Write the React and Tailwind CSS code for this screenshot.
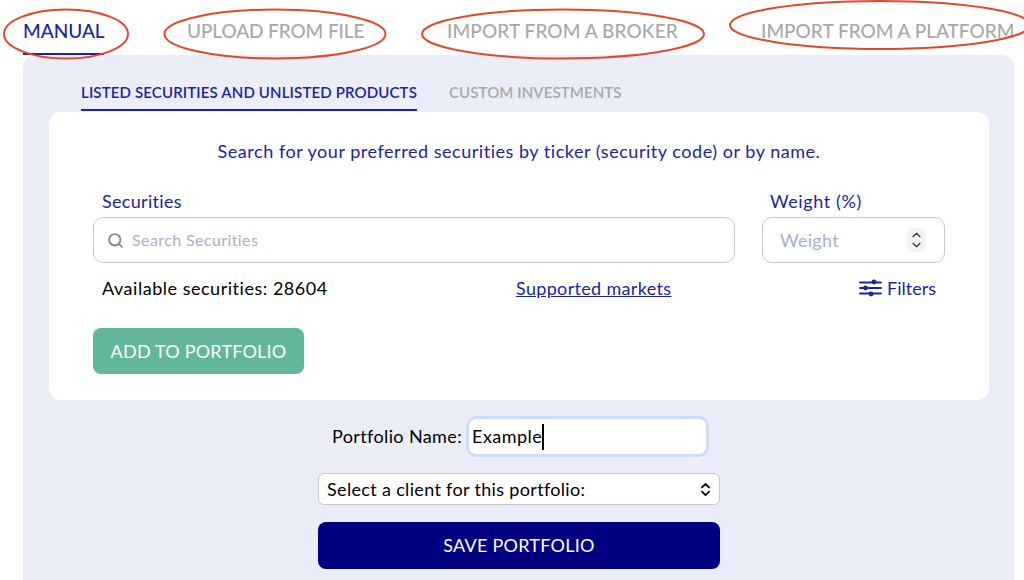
import React from "react";
import { Search, ChevronUp, ChevronDown, ChevronsUpDown } from "lucide-react";

const tabs = [
  { t: "UPLOAD FROM FILE", w: "w-[178px] ml-[83px] tracking-[-0.1px]" },
  { t: "IMPORT FROM A BROKER", w: "w-[231px] ml-[82px] tracking-[0.1px]" },
  { t: "IMPORT FROM A PLATFORM", w: "w-[253px] ml-[83px] tracking-[0px]" },
];

export default function App() {
  return (
    <div className="relative w-[1024px] h-[580px] overflow-hidden bg-white font-['Lato',sans-serif] text-[18px]">
      <div className="flex h-[55px] pl-[23px]">
        <div className="w-[81px] h-[55px] border-b-2 border-[#1a24a5] pt-[17px] text-[19px] leading-[28px] font-medium text-[#1a24a5] whitespace-nowrap">MANUAL</div>
        {tabs.map((x) => (
          <div key={x.t} className={`${x.w} pt-[17px] text-[19px] leading-[28px] text-[#a8a8a8] whitespace-nowrap font-medium`}>{x.t}</div>
        ))}
      </div>

      <div className="ml-[23px] w-[991px] h-[525px] rounded-t-[12px] bg-[#ebedf8] pl-[26px] pr-[25px]">
        <div className="flex h-[57px] pl-[32px]">
          <div className="w-[336px] h-[56px] border-b-2 border-[#1a24a5] pt-[26px] text-[15px] leading-[22px] font-semibold text-[#1a24a5] whitespace-nowrap tracking-[0.14px]">LISTED SECURITIES AND UNLISTED PRODUCTS</div>
          <div className="ml-[32px] pt-[26px] text-[15px] leading-[22px] font-semibold text-[#a8a8a8] whitespace-nowrap tracking-[0.1px]">CUSTOM INVESTMENTS</div>
        </div>

        <div className="w-[940px] h-[288px] rounded-[12px] bg-white px-[44px] pt-[26px]">
          <p className="text-center text-[18px] leading-[26px] text-[#1a24a5] tracking-[0.53px]">Search for your preferred securities by ticker (security code) or by name.</p>

          <div className="mt-[24px] flex gap-[27px]">
            <div className="w-[642px]">
              <div className="pl-[9px] text-[18px] leading-[26px] text-[#1a24a5] tracking-[0.3px]">Securities</div>
              <div className="mt-[3px] flex h-[46px] items-center rounded-[10px] border border-[#c8c8c8] pl-[13px]">
                <Search size={17} strokeWidth={2.8} className="text-[#8a8a8a]" />
                <span className="ml-[8px] text-[16px] text-[#a7b1c4] tracking-[0.4px]">Search Securities</span>
              </div>
            </div>
            <div className="w-[183px]">
              <div className="pl-[8px] text-[18px] leading-[26px] text-[#1a24a5] tracking-[0.6px]">Weight (%)</div>
              <div className="mt-[3px] flex h-[46px] items-center justify-between rounded-[10px] border border-[#c8c8c8] pl-[17px] pr-[18px]">
                <span className="text-[18px] text-[#a7b1c4] tracking-[0.3px]">Weight</span>
                <span className="flex h-[24px] w-[19px] flex-col items-center justify-center rounded-[6px] bg-[#f2f2f2] text-[#333]">
                  <ChevronUp size={15} strokeWidth={2} className="-mb-[2px]" />
                  <ChevronDown size={15} strokeWidth={2} className="-mt-[2px]" />
                </span>
              </div>
            </div>
          </div>

          <div className="mt-[12px] flex h-[26px] items-center justify-between pl-[9px] pr-[9px] leading-[26px]">
            <span className="w-[300px] text-black tracking-[0.52px]">Available securities: 28604</span>
            <a className="ml-[114px] text-[#1a24a5] underline tracking-[0.33px]">Supported markets</a>
            <span className="ml-auto flex items-center gap-[5px] text-[#1a24a5]">
              <svg width="23" height="20" viewBox="0 0 23 20" fill="none" stroke="currentColor" strokeWidth="1.8" strokeLinecap="round">
                <path d="M1 4.5h12M17 4.5h5M1 10h3M9 10h13M1 15.5h9M14 15.5h8" />
                <circle cx="15" cy="4" r="2.4" fill="currentColor" stroke="none" />
                <circle cx="6.5" cy="10" r="2.4" fill="currentColor" stroke="none" />
                <circle cx="12" cy="16" r="2.4" fill="currentColor" stroke="none" />
              </svg>
              Filters
            </span>
          </div>

          <button className="mt-[27px] block h-[46px] w-[211px] rounded-[8px] bg-[#63b79a] text-center text-[18px] text-white tracking-[0.2px]">ADD TO PORTFOLIO</button>
        </div>

        <div className="mt-[16px] flex h-[41px] items-center pl-[283px]">
          <span className="text-black tracking-[0.38px] whitespace-nowrap">Portfolio Name:</span>
          <div className="ml-[4px] flex h-[41px] w-[243px] items-center rounded-[10px] border-[3px] border-[#cfdcf8] bg-white pl-[3px] text-black tracking-[0.45px]">
            Example<span className="h-[26px] w-[2px] bg-black" />
          </div>
        </div>

        <div className="ml-[269px] mt-[16px] flex h-[32px] w-[402px] items-center justify-between rounded-[6px] border border-[#c8c8c8] bg-white pl-[8px] pr-[5px] text-black tracking-[0.33px]">
          Select a client for this portfolio:
          <ChevronsUpDown size={17} strokeWidth={2.4} />
        </div>

        <button className="ml-[269px] mt-[17px] block h-[47px] w-[402px] rounded-[8px] bg-[#000080] text-center text-[18px] text-white tracking-[0.25px]">SAVE PORTFOLIO</button>
      </div>

      <svg className="absolute left-0 top-0 pointer-events-none" width="1024" height="60" fill="none" stroke="#e8452c" strokeWidth="2">
        <ellipse cx="66" cy="34" rx="62" ry="24.5" />
        <ellipse cx="275" cy="34" rx="110.5" ry="24.5" />
        <ellipse cx="563" cy="34" rx="141" ry="24.5" />
        <ellipse cx="880" cy="25" rx="150" ry="24" />
      </svg>
    </div>
  );
}
